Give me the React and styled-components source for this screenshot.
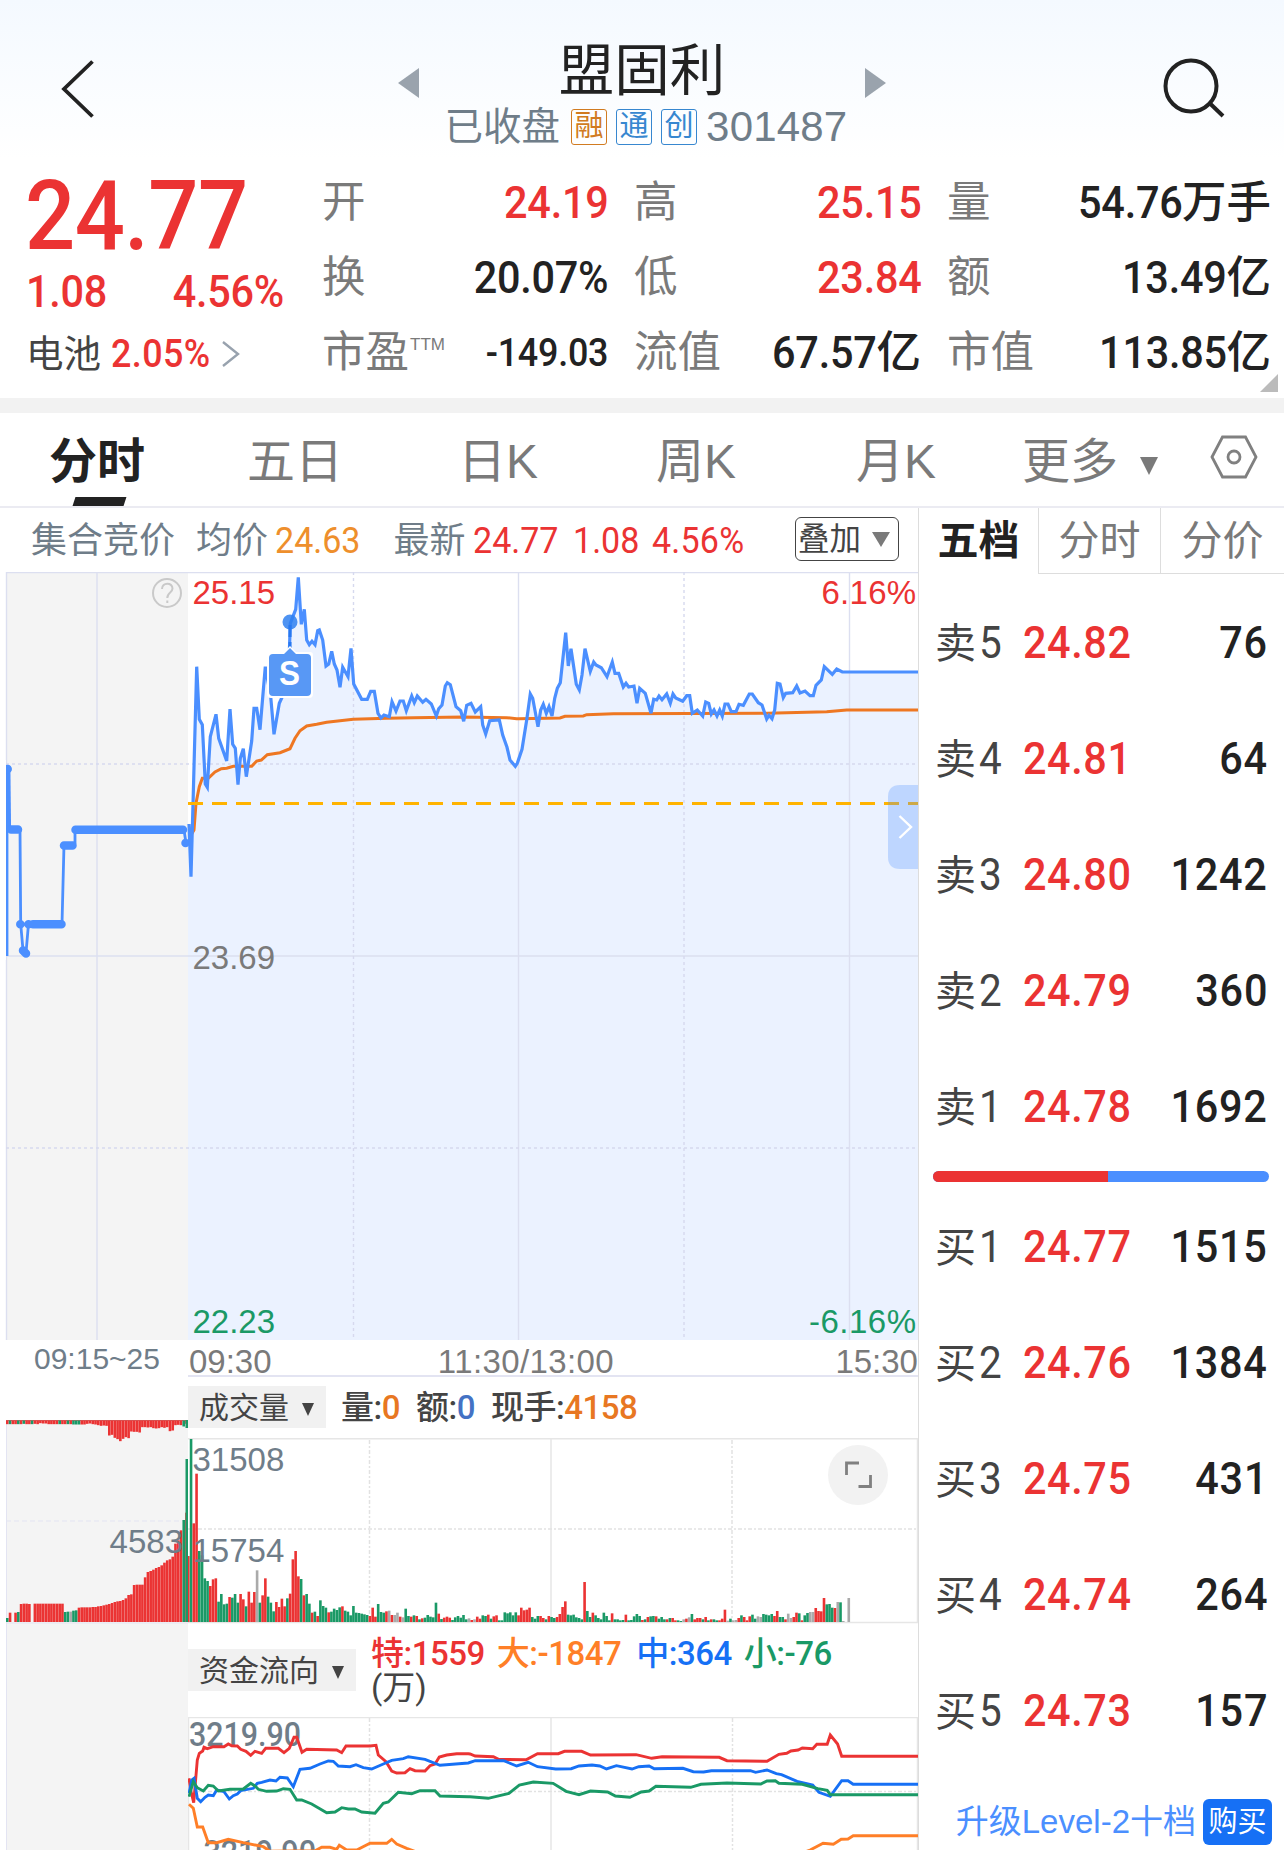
import React from "react";
import styled, { createGlobalStyle, css } from "styled-components";

const colors = {
  red: "#eb3333",
  green: "#1a9966",
  blue: "#4b8fff",
  orange: "#ee7722",
  ink: "#222",
  text: "#444",
  muted: "#7a7a7a",
  slate: "#6f7d89",
  line: "#e3e4f2",
  panel: "#f4f4f4"
};

const cjk = `"Liberation Sans", "Noto Sans CJK SC", sans-serif`;
const din = `Roboto, "Noto Sans CJK SC", sans-serif`;

const GlobalStyle = createGlobalStyle`
  * { box-sizing: border-box; }
  body { margin: 0; background: #fff; }
  svg { display: block; flex: none; }
`;

const Page = styled.div`
  display: flex;
  flex-direction: column;
  width: 1284px;
  height: 1850px;
  overflow: hidden;
  font-family: ${cjk};
  color: ${colors.ink};
  white-space: nowrap;
  background: #fff;
`;

// narrow numerals: squeezed towards the side they are aligned to
const Num = styled.span`
  display: inline-block;
  font-family: ${din};
  font-size: ${p => p.size || 45}px;
  font-weight: ${p => p.weight || 500};
  letter-spacing: ${p => (p.track === undefined ? -0.006 : p.track)}em;
  color: ${p => p.color || "inherit"};
  transform: scaleX(0.92);
  transform-origin: ${p => p.$from || "left"};
`;

/* ---------- header ---------- */

const Header = styled.header`
  display: flex;
  align-items: flex-start;
  height: 160px;
  padding: 0 58px;
  background: linear-gradient(#f4f9ff, #fff);
`;

const HeaderIcon = styled.svg`
  margin-top: ${p => p.$top}px;
`;

const TitleBlock = styled.div`
  flex: 1;
  display: flex;
  flex-direction: column;
  align-items: center;
  padding-left: 24px;
`;

const TitleRow = styled.div`
  display: flex;
  align-items: center;
  justify-content: space-between;
  width: 489px;
  height: 64px;
  margin-top: 39px;
`;

const Arrow = styled.svg`
  margin-top: 24px;
`;

const Title = styled.h1`
  margin: 0;
  font-size: 55.5px;
  font-weight: 400;
  line-height: 64px;
`;

const SubTitle = styled.div`
  display: flex;
  align-items: center;
  height: 46px;
  margin: 1px 0 0 8px;
  line-height: 46px;
  font-size: 38.5px;
  color: ${colors.slate};
`;

const Tag = styled.span`
  width: 36px;
  height: 36px;
  margin: -1px 0 0 9px;
  border: 1.5px solid currentColor;
  border-radius: 3px;
  font-size: 29px;
  line-height: 33px;
  text-align: center;
  color: ${p => p.color};

  &:first-of-type { margin-left: 11px; }
`;

const Code = styled.span`
  margin-left: 9px;
  font-size: 42px;
  letter-spacing: 0.2px;
`;

/* ---------- quote ---------- */

const Quote = styled.section`
  position: relative;
  display: flex;
  height: 240px;
  padding: 6px 13px 0 26px;
`;

const Last = styled.div`
  width: 297px;
`;

const BigPrice = styled(Num)`
  display: block;
  margin: 10px 0 0 -1px;
  line-height: 82px;
`;

const Change = styled.div`
  display: flex;
  justify-content: space-between;
  width: 258px;
  height: 66px;
  line-height: 70px;
  color: ${colors.red};
`;

const Sector = styled.div`
  display: flex;
  align-items: center;
  height: 62px;
  font-size: 37.5px;
  line-height: 62px;
  color: ${colors.text};

  ${Num} { margin-left: 10px; }
  svg { margin-left: 2px; }
`;

const Stats = styled.div`
  display: grid;
  grid-template-columns: 285px 286px 1fr;
  column-gap: 27px;
  grid-auto-rows: 75px;
  flex: 1;
`;

const Stat = styled.div`
  display: flex;
  align-items: center;
  justify-content: space-between;
  font-size: 43.5px;
  line-height: 75px;
  color: ${colors.muted};

  > span:first-child { margin-left: -1px; }

  sup {
    font-size: 17px;
    line-height: 1;
    vertical-align: 17px;
    margin-left: 1px;
  }
`;

const Unit = styled.span`
  font-size: 44.5px;
  font-weight: 500;
  color: ${colors.ink};
`;

const Corner = styled.i`
  position: absolute;
  right: 6px;
  bottom: 6px;
  border: 9px solid transparent;
  border-right-color: #bbb;
  border-bottom-color: #bbb;
`;

const Gap = styled.div`
  height: 15px;
  background: #f2f2f2;
`;

/* ---------- period tabs ---------- */

const Tabs = styled.nav`
  display: grid;
  grid-template-columns: 194px 202px 204px 192px 208px 180px 1fr;
  height: 95px;
  border-bottom: 2px solid #ebebf2;
`;

const Tab = styled.div`
  position: relative;
  display: flex;
  align-items: center;
  justify-content: center;
  gap: 22px;
  padding-top: 5px;
  font-size: 48px;
  line-height: 88px;
  color: ${colors.muted};

  i { margin-top: 7px; }
  svg { margin: -10px 0 0 4px; }

  ${p =>
    p.$active &&
    css`
      color: ${colors.ink};
      font-weight: 700;

      &::after {
        content: "";
        position: absolute;
        left: 74px;
        bottom: 0;
        width: 51px;
        height: 9px;
        transform: skewX(-18deg);
        background: ${colors.ink};
      }
    `}
`;

const Caret = styled.i`
  border: ${p => p.size / 2}px solid transparent;
  border-top: ${p => p.$h || p.size}px solid ${p => p.color || colors.muted};
  border-bottom: 0;
`;

/* ---------- body ---------- */

const Body = styled.main`
  display: flex;
  flex: 1;
`;

const ChartColumn = styled.section`
  width: 919px;
  border-right: 1.5px solid #ddd;
`;

const Info = styled.div`
  display: flex;
  align-items: center;
  height: 64px;
  padding: 1px 19px 0 31px;
  font-size: 36px;
  line-height: 64px;
  color: ${colors.slate};
`;

const InfoItem = styled.span`
  margin-right: ${p => p.$after}px;

  ${Num} { margin: 0 -0.2em 0 7px; }
`;

const Overlay = styled.button`
  display: flex;
  align-items: center;
  justify-content: space-between;
  width: 104px;
  height: 44px;
  margin: 0 0 3px auto;
  padding: 0 8px 0 2px;
  border: 1.5px solid ${colors.text};
  border-radius: 6px;
  background: none;
  font: 31.5px/40px ${cjk};
  color: ${colors.text};
`;

const Axis = styled.div`
  display: grid;
  grid-template-columns: 182px 1fr 1fr 1fr;
  height: 37px;
  padding-left: 6px;
  font-size: 33px;
  line-height: 43px;
  color: ${colors.muted};

  span:nth-child(2) { padding-left: 1px; }
  span:nth-child(3) { text-align: center; margin-left: -54px; letter-spacing: 0.4px; }
  span:last-child { text-align: right; }
`;

const AxisAuction = styled.span`
  padding-left: 28px;
  font-size: 30px;
  line-height: 38px;
  color: ${colors.slate};
`;

const Lower = styled.div`
  display: grid;
  grid-template-columns: 188px 1fr;
`;

const Panels = styled.div`
  border-top: 2px solid ${colors.line};
  margin-top: -2px;
`;

const PanelHead = styled.div`
  display: flex;
  height: ${p => p.$height}px;
  padding-top: ${p => p.$top}px;
  font-family: ${din};
  font-size: 33px;
  font-weight: 500;
  line-height: 44px;
  color: ${colors.text};
`;

const Picker = styled.button`
  display: flex;
  align-items: center;
  gap: 13px;
  height: 42px;
  margin: 0 15px 0 0;
  padding: 1px 12px 0 11px;
  border: 0;
  background: #f1f1f1;
  font: 30px/42px ${cjk};
  color: ${colors.text};

  i { margin-top: 3px; }
`;

const Metric = styled.span`
  margin-right: ${p => p.$after || 0}px;
  letter-spacing: -0.015em;
  color: ${p => p.color || colors.text};
`;

const FlowMetrics = styled.div`
  margin-top: -12px;
  line-height: 34px;

  div { font-weight: 400; }
`;

/* ---------- order book ---------- */

const Book = styled.aside`
  flex: 1;
  display: flex;
  flex-direction: column;
`;

const BookTabs = styled.div`
  display: grid;
  grid-template-columns: 119px 122px 1fr;
  height: 66px;
  margin-bottom: 11px;
`;

const BookTab = styled.div`
  padding-top: 2px;
  font-size: 41px;
  line-height: 63px;
  text-align: center;
  color: ${p => (p.$active ? colors.ink : colors.muted)};
  font-weight: ${p => (p.$active ? 700 : 400)};
  border: 1.5px solid #ddd;
  border-width: ${p => (p.$active ? "0" : "0 0 1.5px 1.5px")};
`;

const Side = styled.div`
  padding: 0 16px;
`;

const Level = styled.div`
  display: grid;
  grid-template-columns: 88px 1fr auto;
  align-items: center;
  height: 116px;
  font-size: 41px;
  line-height: 60px;
  color: ${colors.text};

  > span:first-child ${Num} { margin-left: 3px; }
`;

const Ratio = styled.div`
  display: flex;
  height: 11px;
  margin: 6px 15px 7px 14px;
  border-radius: 6px;
  overflow: hidden;
  background: ${colors.blue};

  &::before {
    content: "";
    width: 52%;
    background: ${colors.red};
  }
`;

const Upgrade = styled.div`
  display: flex;
  align-items: center;
  justify-content: flex-end;
  gap: 7px;
  margin-top: 29px;
  padding-right: 12px;
  font-size: 33px;
  line-height: 48px;
  color: ${colors.blue};
`;

const Buy = styled.button`
  width: 69px;
  height: 46px;
  padding: 0;
  border: 0;
  border-radius: 6px;
  background: #1670f5;
  font: 29px/46px ${cjk};
  color: #fff;
`;

/* ---------- chart data, in thirds of a pixel ---------- */

const priceAm = [
  [27, 792], [33, 950], [40, 700], [50, 320], [58, 478], [67, 494], [76, 672], [82, 682], [91, 530], [108, 463],
  [116, 535], [140, 603], [150, 447], [158, 553], [166, 565], [174, 674], [181, 595], [190, 566], [199, 650],
  [215, 543], [222, 445], [230, 445], [240, 509], [256, 320], [272, 410], [282, 523], [298, 430], [307, 410],
  [314, 360], [324, 395], [331, 190], [347, 148], [355, 52], [364, 193], [373, 148], [380, 240], [388, 254],
  [396, 244], [405, 254], [413, 212], [418, 210], [428, 240], [438, 318], [446, 312], [455, 274], [463, 312],
  [471, 330], [480, 382], [488, 322], [504, 350], [513, 265], [521, 372], [545, 418], [562, 418], [572, 394],
  [583, 394], [594, 460], [603, 474], [612, 465], [628, 470], [636, 425], [648, 453], [660, 423], [670, 423],
  [679, 452], [695, 408], [703, 428], [712, 408], [728, 427], [738, 418], [754, 432], [769, 468], [776, 446],
  [786, 435], [796, 378], [802, 368], [811, 374], [828, 440], [842, 452], [851, 484], [860, 436], [873, 430],
  [886, 456], [902, 440], [908, 495], [917, 522], [929, 482], [958, 480], [968, 525], [981, 562], [990, 600],
  [1006, 619], [1012, 610], [1026, 568], [1040, 480]
];

const pricePm = [
  [91, 402], [98, 415], [114, 500], [122, 450], [130, 433], [139, 460], [147, 440], [156, 468], [164, 415],
  [172, 385], [181, 368], [197, 218], [205, 318], [213, 266], [229, 373], [238, 390], [246, 345], [255, 266],
  [271, 334], [281, 306], [288, 315], [304, 323], [321, 350], [337, 306], [345, 340], [356, 340], [370, 381],
  [378, 370], [386, 381], [402, 378], [411, 430], [419, 385], [436, 400], [453, 460], [461, 418], [470, 420],
  [477, 408], [486, 419], [500, 402], [511, 430], [519, 402], [527, 414], [548, 424], [560, 407], [569, 407],
  [577, 460], [592, 450], [608, 468], [617, 426], [626, 430], [634, 462], [642, 450], [651, 468], [659, 450],
  [667, 468], [675, 432], [684, 432], [694, 455], [708, 455], [717, 433], [730, 436], [748, 402], [757, 402],
  [775, 428], [786, 435], [800, 477], [807, 466], [816, 476], [824, 450], [832, 370], [840, 372], [850, 413],
  [857, 400], [878, 398], [890, 378], [900, 399], [915, 393], [930, 407], [940, 407], [948, 376], [964, 360],
  [973, 320], [997, 343], [1010, 327], [1027, 336], [1254, 336]
];

const averageAm = [
  [30, 830], [42, 810], [48, 730], [58, 680], [67, 655], [85, 655], [105, 636], [124, 626], [140, 625], [160, 619],
  [215, 619], [230, 603], [244, 600], [262, 584], [300, 578], [330, 566], [345, 535], [360, 512], [380, 498],
  [410, 493], [440, 487], [480, 482], [520, 478], [620, 475], [700, 473], [850, 471], [980, 473], [1010, 476]
];

const averagePm = [
  [55, 476], [180, 474], [195, 469], [250, 468], [260, 464], [340, 461], [800, 460], [920, 457], [980, 455],
  [1040, 450], [1254, 450]
];

const flowAm = {
  red: [
    [567, 475], [572, 510], [581, 548], [592, 420], [598, 400], [608, 393], [612, 382], [622, 386], [640, 380],
    [672, 380], [685, 372], [695, 377], [712, 378], [722, 388], [738, 394], [752, 406], [765, 394], [785, 400],
    [797, 385], [835, 385], [852, 398], [868, 385], [882, 352], [890, 352], [906, 397], [920, 388], [1010, 390],
    [1025, 398], [1038, 378], [1110, 378], [1128, 376], [1135, 405], [1158, 425], [1175, 453], [1190, 459],
    [1215, 458], [1230, 446], [1245, 452], [1275, 453], [1290, 437], [1305, 432], [1318, 411], [1340, 405],
    [1370, 401], [1405, 401]
  ],
  blue: [
    [567, 520], [575, 480], [582, 475], [592, 535], [602, 545], [615, 532], [625, 525], [640, 527], [650, 510],
    [672, 515], [688, 537], [700, 527], [712, 522], [722, 512], [760, 505], [772, 490], [785, 487], [810, 480],
    [828, 483], [840, 472], [862, 474], [880, 500], [900, 448], [930, 445], [960, 432], [985, 423], [1000, 424],
    [1015, 438], [1050, 440], [1068, 434], [1090, 443], [1115, 447], [1150, 432], [1175, 421], [1210, 416],
    [1225, 410], [1275, 418], [1320, 436], [1405, 429]
  ],
  green: [
    [567, 530], [580, 485], [592, 503], [610, 513], [625, 496], [640, 498], [655, 513], [690, 508], [730, 507],
    [752, 490], [765, 498], [775, 508], [800, 514], [830, 513], [850, 506], [870, 508], [890, 540], [905, 540],
    [935, 552], [980, 578], [1005, 576], [1025, 563], [1045, 567], [1065, 567], [1085, 576], [1125, 580],
    [1150, 550], [1165, 546], [1195, 517], [1235, 521], [1260, 512], [1305, 512], [1320, 528], [1405, 530]
  ],
  orange: [
    [567, 553], [580, 565], [592, 621], [608, 621], [625, 668], [650, 668], [685, 658], [730, 668], [790, 680],
    [810, 694], [945, 692], [965, 682], [990, 682], [1010, 688], [1018, 676], [1040, 690], [1070, 690],
    [1110, 670], [1160, 670], [1175, 658], [1190, 672], [1220, 685], [1260, 700], [1400, 710]
  ]
};

const flowPm = {
  red: [
    [0, 402], [10, 408], [45, 410], [55, 418], [108, 419], [130, 401], [170, 401], [182, 394], [215, 394],
    [232, 405], [320, 404], [350, 415], [370, 410], [480, 412], [495, 422], [572, 424], [595, 403], [610, 400],
    [618, 393], [632, 390], [640, 384], [660, 386], [668, 373], [688, 373], [694, 345], [708, 372], [716, 409],
    [863, 409]
  ],
  blue: [
    [10, 422], [65, 422], [90, 438], [112, 427], [130, 440], [165, 447], [195, 446], [210, 438], [235, 435],
    [250, 438], [263, 447], [282, 437], [312, 447], [325, 440], [345, 438], [355, 446], [410, 445], [430, 455],
    [450, 456], [465, 452], [540, 452], [550, 457], [572, 450], [590, 461], [600, 464], [630, 484], [660, 495],
    [672, 517], [694, 529], [716, 482], [728, 482], [738, 493], [863, 493]
  ],
  green: [
    [0, 530], [35, 535], [75, 520], [95, 495], [122, 486], [160, 490], [185, 514], [210, 524], [232, 513],
    [265, 516], [280, 528], [308, 532], [330, 516], [345, 513], [358, 499], [425, 502], [445, 493], [495, 489],
    [560, 492], [572, 483], [588, 482], [595, 490], [640, 493], [670, 506], [688, 511], [694, 524], [863, 524]
  ],
  orange: [[630, 705], [655, 690], [680, 670], [700, 673], [715, 658], [728, 657], [738, 647], [863, 647]]
};

// r = up, g = down, x = flat, followed by the bar height
const volumes = `r198 g549 r296 r445 g213 g200 g131 g123 r108 r128 r131 g61 g84 g53 g55 r75 g73 g84 g58 r84 r68 g47
r91 r58 r90 x155 g58 r80 r131 g76 g58 g32 r60 r45 r70 r47 g71 r85 r188 r213 r137 g129 r80 g84 g55 r28 g31 r18 g65
g48 g43 r29 g31 g40 g36 g44 r47 g34 g31 g20 g48 g28 g27 g25 g23 g21 r18 r43 r16 g54 g30 g28 r32 x34 r21 x21 x28
r16 x14 g40 g18 r16 g20 r18 g8 r11 g13 g21 g16 g14 g58 r25 g9 r13 r16 r13 g6 g14 g18 g13 g21 g8 x11 r6 x8 r16 r10
g20 g18 r22 g10 r17 r20 g5 g5 g29 g26 g29 g20 g29 r20 r43 r35 r37 r43 g15 g10 g18 r18 r12 g8 r18 g15 g12 r15 r24
r45 r62 g22 g20 g22 g14 g12 g8 r120 g33 g15 r28 g20 g12 g8 g28 g18 g5 r26 g8 g8 g5 g6 r22 g5 g6 g17 g24 g18 r6 g8
r15 g17 g18 r17 g10 g15 g8 r8 g12 r12 r5 g5 g3 x8 r10 x14 g24 r8 r12 r12 g8 r15 g5 r8 g8 g5 r5 r10 r37 x4 g10 x5
x6 r12 g20 r15 r5 r17 g22 g10 x17 x15 g24 g22 g20 g24 r18 r33 g15 g15 r8 x25 x12 r15 r28 g26 r5 g20 g27 x30 x30
r42 r33 r32 r72 g53 g54 g43 r42 x60 g59 x3 x0 x72`;

const auctionVolumes = `g12 r28 x0 r28 g30 r54 r55 r55 r54 x0 r55 r55 r55 r55 r55 r55 r55 r55 r55 r55 r55 g30 g31 x31
g34 g35 r43 r44 r44 r44 r44 r45 r45 r47 r48 r50 r52 r54 r57 r60 r62 r63 r66 r71 r81 r83 r111 r112 r112 r112 r134
r150 r153 r157 r162 r165 r170 r178 r185 r188 r196 r235 r245 r275 g306 r328`;

const auctionUnmatched = `r11 g11 r11 r11 g11 r11 g10 r11 r11 g11 r10 r11 r8 r9 r9 r11 r11 r11 r11 g11 r11 r11 g11
r11 g12 g12 g12 r12 r12 r10 r9 r11 r12 r14 r16 r15 r16 r45 r43 r52 r56 r62 r55 r50 r53 r33 r34 r34 r36 r20 r20 r21
r20 r23 r24 r23 r20 r22 r20 r32 r30 r14 r13 r14 g18 r10`;

const barColors = { r: colors.red, g: colors.green, x: "#aaa" };

const toPoints = (points, x, y, scale = 1 / 3) =>
  points.map(([px, py]) => `${(x + px * scale).toFixed(1)},${(y + py / 3).toFixed(1)}`).join(" ");

const Bars = ({ data, x, pitch, base, down }) =>
  data.split(/\s+/).map((item, i) => {
    const height = Number(item.slice(1)) / 3;
    return (
      <rect
        key={i}
        x={x + i * pitch}
        y={down ? base : base - height}
        width={pitch - 0.15}
        height={height}
        fill={barColors[item[0]]}
      />
    );
  });

const Label = styled.text`
  font: ${p => p.$size || 33}px ${p => (p.$din ? din : cjk)};
  font-weight: ${p => (p.$din ? 500 : 400)};
`;

const PriceChart = () => {
  const price = `${toPoints(priceAm, 180, 560)} ${toPoints(pricePm, 500, 560)}`;
  const average = `${toPoints(averageAm, 180, 560)} ${toPoints(averagePm, 500, 560)}`;

  return (
    <svg width="918" height="768" viewBox="0 572 918 768">
      <rect x="6" y="572" width="182" height="768" fill={colors.panel} />
      <polygon points={`188,1340 188,824 ${price} 918,1340`} fill="#ebf2ff" />
      <g stroke="#dcdff0" strokeWidth="1.4">
        <path d="M6.5 1340V572.5H918M97 572V1340M518.5 572V1340M849.5 572V1340M6 956H918" fill="none" />
        <path d="M353.5 572V1340M684 572V1340M6 764H918M6 1148H918" stroke="#d6d9ee" strokeDasharray="3 3" />
      </g>

      <g fill="none" stroke={colors.blue} strokeWidth="2.8">
        <path d="M7 956V767M20 829L20.700 924L23 950L26 953L28.500 924H62L64 845L75 843V830H184L186 843" />
        <path d="M8.300 768L9 830" strokeWidth="4.200" />
        <path
          d="M7.600 769H7.700M11 829.500H18M20.300 924.300H20.400M23 950.600L26 953.600M28.500 924.300H28.600M33 924.300H61.500M64 845.500H72.500M75.500 829.700H183M185.500 843V843.100"
          strokeWidth="8.500"
          strokeLinecap="round"
        />
      </g>
      <rect x="0" y="760" width="6" height="200" fill="#fff" />

      <polyline points={average} fill="none" stroke={colors.orange} strokeWidth="3" />
      <polyline points={price} fill="none" stroke={colors.blue} strokeWidth="3.2" />
      <path d="M188 803.500H918" stroke="#ffb300" strokeWidth="3" strokeDasharray="15 9" />

      <g fill="none" stroke="#c9c9c9" strokeWidth="2">
        <circle cx="167" cy="593" r="14" />
        <path d="M162 589C162 582 172.500 582 172.500 588.500C172.500 593 167.300 592 167.300 598M167.300 600.500V603" />
      </g>

      {/* sell marker */}
      <circle cx="290" cy="622" r="7.500" fill="#2f80f0" opacity="0.85" />
      <path d="M290 625V649" stroke="#2878f0" strokeWidth="3" strokeDasharray="12 5" />
      <path d="M267 652H284L290 646L296 652H310Q313 652 313 655V694Q313 698 309 698H271Q267 698 267 694Z" fill="#fff" />
      <path d="M284 654L290 648L296 654H307Q311 654 311 658V692Q311 696 307 696H273Q269 696 269 692V658Q269 654 273 654Z" fill="#5898f5" />
      <text x="289.500" y="685" textAnchor="middle" fontFamily="Liberation Sans" fontWeight="700" fontSize="35" textLength="21" lengthAdjust="spacingAndGlyphs" fill="#fff">
        S
      </text>

      <Label x="192.500" y="604" fill={colors.red}>25.15</Label>
      <Label x="916.500" y="604" fill={colors.red} textAnchor="end" letterSpacing="0.3">6.16%</Label>
      <Label x="192.500" y="969" fill={colors.muted}>23.69</Label>
      <Label x="192.500" y="1333" fill={colors.green}>22.23</Label>
      <Label x="916.500" y="1333" fill={colors.green} textAnchor="end" letterSpacing="0.5">-6.16%</Label>

      <path d="M918 785H900Q888 785 888 797V857Q888 869 900 869H918Z" fill="#4b8fff" opacity="0.28" />
      <path d="M899.500 816L911 827L899.500 838" fill="none" stroke="#fff" strokeWidth="2.400" />
    </svg>
  );
};

const AuctionChart = () => (
  <svg width="188" height="473" viewBox="0 1377 188 473">
    <rect x="6" y="1420" width="182" height="430" fill={colors.panel} />
    <path d="M6.500 1420V1850M6 1623H188" stroke={colors.line} />
    <path d="M6 1521H188" stroke={colors.line} strokeDasharray="5 3" />
    <path d="M6 1420.500H188" stroke="#c86a6a" />
    <Bars data={auctionUnmatched} x={6} pitch={2.757} base={1420.5} down />
    <Bars data={auctionVolumes} x={6} pitch={2.757} base={1622} />
    <rect x="185.500" y="1459" width="2.700" height="163" fill={colors.green} />
    <rect x="185.500" y="1420" width="2.700" height="8" fill={colors.green} />
    <Label x="183" y="1553" fill={colors.slate} textAnchor="end">4583</Label>
  </svg>
);

const VolumeChart = () => (
  <svg width="730" height="186" viewBox="188 1438 730 186">
    <path d="M188 1438.800H917.500V1622.500H188M551 1438V1622" fill="none" stroke="#e6e6e6" strokeWidth="1.500" />
    <path d="M369.500 1440V1622M732 1440V1622M188 1529H917" stroke="#e2e2e2" strokeWidth="1.500" strokeDasharray="4 2 2 2" />
    <Bars data={volumes} x={187} pitch={2.752} base={1622} />
    <Label x="192.500" y="1471" fill={colors.slate}>31508</Label>
    <Label x="192.500" y="1562" fill={colors.slate}>15754</Label>
    <circle cx="858" cy="1475" r="30" fill="#f2f2f2" />
    <path d="M846.500 1475V1463H859M858.500 1486.500H870.500V1475" fill="none" stroke="#808080" strokeWidth="2.800" />
  </svg>
);

const FlowChart = () => (
  <svg width="730" height="133" viewBox="188 1717 730 133">
    <path d="M188.500 1850V1717.500H917.500V1850M551 1717V1850" fill="none" stroke="#e6e6e6" strokeWidth="1.500" />
    <path d="M369.500 1718V1850M732.500 1718V1850M188 1791.500H917" stroke="#e2e2e2" strokeWidth="1.500" strokeDasharray="4 2 2 2" />
    <Label x="189" y="1746" $din $size={33.5} textLength="112" lengthAdjust="spacingAndGlyphs" fill={colors.slate}>3219.90</Label>
    <Label x="193" y="1864" $din $size={33.5} textLength="123" lengthAdjust="spacingAndGlyphs" fill={colors.slate}>-3219.90</Label>
    {[["orange", "#ff7f27"], ["red", colors.red], ["blue", "#1670f5"], ["green", colors.green]].map(([key, stroke]) => (
      <polyline
        key={key}
        points={`${toPoints(flowAm[key], 0, 1620)} ${toPoints(flowPm[key], 470, 1620, 0.5192)}`}
        fill="none"
        stroke={stroke}
        strokeWidth="2.900"
      />
    ))}
  </svg>
);

const stats = [
  ["开", "24.19", "", colors.red], ["高", "25.15", "", colors.red], ["量", "54.76", "万手"],
  ["换", "20.07%"], ["低", "23.84", "", colors.red], ["额", "13.49", "亿"],
  ["市盈", "-149.03"], ["流值", "67.57", "亿"], ["市值", "113.85", "亿"]
];

const asks = [["卖", 5, "24.82", 76], ["卖", 4, "24.81", 64], ["卖", 3, "24.80", 1242], ["卖", 2, "24.79", 360], ["卖", 1, "24.78", 1692]];
const bids = [["买", 1, "24.77", 1515], ["买", 2, "24.76", 1384], ["买", 3, "24.75", 431], ["买", 4, "24.74", 264], ["买", 5, "24.73", 157]];

const Levels = ({ rows }) => (
  <Side>
    {rows.map(([side, level, price, volume]) => (
      <Level key={level}>
        <span>
          {side}
          <Num size={44} weight={400}>{level}</Num>
        </span>
        <Num color={colors.red} track={0.014}>{price}</Num>
        <Num color={colors.ink} track={0.018} $from="right">{volume}</Num>
      </Level>
    ))}
  </Side>
);

const App = () => (
  <Page>
    <GlobalStyle />
    <Header>
      <HeaderIcon $top={58} width="40" height="62" viewBox="58 58 40 62">
        <path d="M92.500 61.500L64 89L92.500 116.500" fill="none" stroke={colors.ink} strokeWidth="3.800" />
      </HeaderIcon>
      <TitleBlock>
        <TitleRow>
          <Arrow width="21" height="30"><path d="M21 0V30L0 15Z" fill="#9aa3ad" /></Arrow>
          <Title>盟固利</Title>
          <Arrow width="21" height="30"><path d="M0 0V30L21 15Z" fill="#9aa3ad" /></Arrow>
        </TitleRow>
        <SubTitle>
          已收盘
          <Tag color="#d17b21">融</Tag>
          <Tag color="#3787d0">通</Tag>
          <Tag color="#3787d0">创</Tag>
          <Code>301487</Code>
        </SubTitle>
      </TitleBlock>
      <HeaderIcon $top={56} width="64" height="64" viewBox="1162 56 64 64">
        <circle cx="1191" cy="86" r="25.500" fill="none" stroke={colors.ink} strokeWidth="4" />
        <path d="M1209.500 103L1223 116" stroke={colors.ink} strokeWidth="4" />
      </HeaderIcon>
    </Header>

    <Quote>
      <Last>
        <BigPrice size={96} color={colors.red}>24.77</BigPrice>
        <Change>
          <Num>1.08</Num>
          <Num $from="right">4.56%</Num>
        </Change>
        <Sector>
          电池
          <Num size={39} track={0.012} color={colors.red}>2.05%</Num>
          <svg width="20" height="28"><path d="M2 2L17 14L2 26" fill="none" stroke="#98a2ae" strokeWidth="2.400" /></svg>
        </Sector>
      </Last>
      <Stats>
        {stats.map(([label, value, unit, color]) => (
          <Stat key={label}>
            <span>
              {label}
              {label === "市盈" && <sup>TTM</sup>}
            </span>
            <span>
              <Num size={value[0] === "-" ? 39 : 45} $from="right" color={color || colors.ink}>{value}</Num>
              {unit && <Unit>{unit}</Unit>}
            </span>
          </Stat>
        ))}
      </Stats>
      <Corner />
    </Quote>
    <Gap />

    <Tabs>
      <Tab $active>分时</Tab>
      <Tab>五日</Tab>
      <Tab>日K</Tab>
      <Tab>周K</Tab>
      <Tab>月K</Tab>
      <Tab>
        更多
        <Caret size={18} />
      </Tab>
      <Tab>
        <svg width="48" height="44" viewBox="0 0 48 44" fill="none" stroke="#808080" strokeWidth="2.800">
          <path d="M2 22L12.500 2H35.500L46 22L35.500 42H12.500Z" />
          <circle cx="24" cy="22" r="6" />
        </svg>
      </Tab>
    </Tabs>

    <Body>
      <ChartColumn>
        <Info>
          <InfoItem $after={21}>集合竞价</InfoItem>
          <InfoItem $after={33}>
            均价<Num size={37} weight={400} track={0} color="#ee8f2c">24.63</Num>
          </InfoItem>
          <InfoItem $after={8}>
            最新<Num size={37} weight={400} track={0} color={colors.red}>24.77</Num>
          </InfoItem>
          <InfoItem $after={7}><Num size={37} weight={400} track={0} color={colors.red}>1.08</Num></InfoItem>
          <InfoItem $after={0}><Num size={37} weight={400} track={0.006} color={colors.red}>4.56%</Num></InfoItem>
          <Overlay>
            叠加
            <Caret size={19} $h={15} />
          </Overlay>
        </Info>
        <PriceChart />
        <Axis>
          <AxisAuction>09:15~25</AxisAuction>
          <span>09:30</span>
          <span>11:30/13:00</span>
          <span>15:30</span>
        </Axis>
        <Lower>
          <AuctionChart />
          <Panels>
            <PanelHead $height={61} $top={9}>
              <Picker>
                成交量
                <Caret size={12} $h={13} color={colors.text} />
              </Picker>
              <Metric>量:</Metric>
              <Metric $after={16} color="#e87722">0</Metric>
              <Metric>额:</Metric>
              <Metric $after={16} color="#4472c4">0</Metric>
              <Metric>现手:</Metric>
              <Metric color="#e87722">4158</Metric>
            </PanelHead>
            <VolumeChart />
            <PanelHead $height={93} $top={25}>
              <Picker>
                资金流向
                <Caret size={12} $h={13} color={colors.text} />
              </Picker>
              <FlowMetrics>
                <Metric $after={12} color={colors.red}>特:1559</Metric>
                <Metric $after={15} color="#ff7f27">大:-1847</Metric>
                <Metric $after={12} color="#1670f5">中:364</Metric>
                <Metric color={colors.green}>小:-76</Metric>
                <div>(万)</div>
              </FlowMetrics>
            </PanelHead>
            <FlowChart />
          </Panels>
        </Lower>
      </ChartColumn>

      <Book>
        <BookTabs>
          <BookTab $active>五档</BookTab>
          <BookTab>分时</BookTab>
          <BookTab>分价</BookTab>
        </BookTabs>
        <Levels rows={asks} />
        <Ratio />
        <Levels rows={bids} />
        <Upgrade>
          升级Level-2十档
          <Buy>购买</Buy>
        </Upgrade>
      </Book>
    </Body>
  </Page>
);

export default App;
